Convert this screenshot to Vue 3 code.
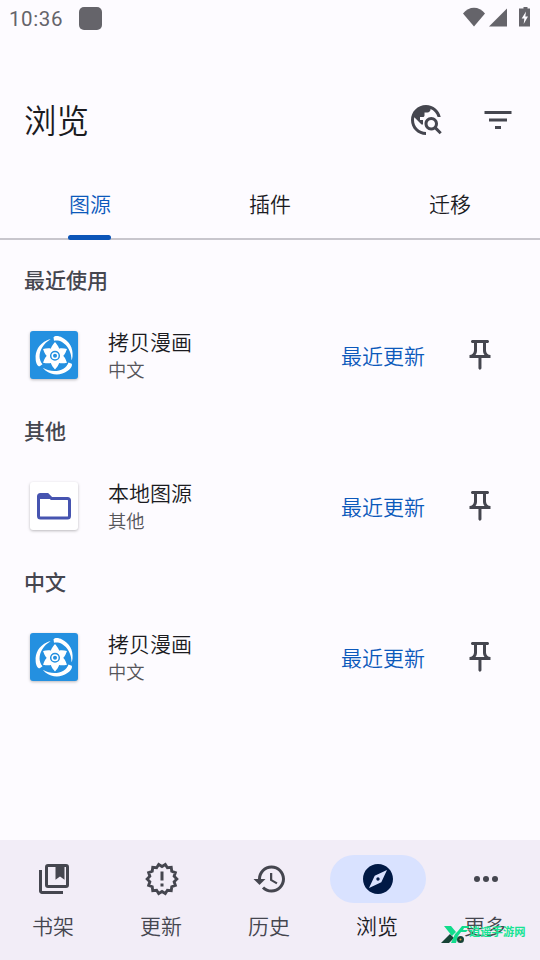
<script setup>
const tabs = ['图源', '插件', '迁移']
const sections = [
  { heading: '最近使用', name: '拷贝漫画', lang: '中文', icon: 'reel' },
  { heading: '其他', name: '本地图源', lang: '其他', icon: 'folder' },
  { heading: '中文', name: '拷贝漫画', lang: '中文', icon: 'reel' },
]
const nav = [
  { label: '书架', icon: 'library' },
  { label: '更新', icon: 'badge' },
  { label: '历史', icon: 'history' },
  { label: '浏览', icon: 'compass' },
  { label: '更多', icon: 'more' },
]
// alternating outer and inner vertices around a centre
function star(cx, cy, outer, inner, count, offset) {
  return Array.from({ length: count * 2 }, (_, i) => {
    const a = offset + (i * Math.PI) / count
    const r = i % 2 ? inner : outer
    return `${(cx + r * Math.cos(a)).toFixed(2)},${(cy + r * Math.sin(a)).toFixed(2)}`
  }).join(' ')
}
const burst = star(12, 12, 9.9, 8.3, 14, 0)
</script>

<template>
  <div class="screen">
    <header class="status">
      <span class="clock">10:36</span>
      <span class="chip"></span>
      <svg class="signals" viewBox="0 0 72 24">
        <path d="M1 7.5C7-.1 17-.1 23 7.5L12 20.5z" />
        <path d="M45 2.500v18H27z" />
        <path d="M59 2.500h2.500V1h4v1.500H68V20.500H57V2.500z" />
        <path class="bolt" d="M64 5.500l-4.300 7h2.600l-.6 5.500 4.300-7.500h-2.700z" />
      </svg>
    </header>

    <div class="appbar">
      <h1>浏览</h1>
      <svg class="icon" viewBox="0 0 24 24"><path d="M19.3 16.9c.4-.7.7-1.5.7-2.4 0-2.5-2-4.500-4.500-4.500S11 12 11 14.500s2 4.500 4.500 4.500c.9 0 1.700-.3 2.400-.7l3.200 3.200 1.400-1.400-3.200-3.200zm-3.800.1c-1.400 0-2.500-1.100-2.500-2.500s1.100-2.500 2.500-2.500 2.500 1.100 2.500 2.500-1.100 2.500-2.500 2.500zM12 20v2C6.480 22 2 17.520 2 12S6.480 2 12 2c4.840 0 8.870 3.440 9.800 8h-2.070c-.64-2.460-2.400-4.470-4.730-5.410V5c0 1.100-.9 2-2 2h-2v2c0 .55-.45 1-1 1H8v2h2v3H9l-4.790-4.790C4.080 10.790 4 11.380 4 12c0 4.410 3.590 8 8 8z" /></svg>
      <svg class="icon" viewBox="0 0 24 24"><path d="M10 18h4v-2h-4v2zM3 6v2h18V6H3zm3 7h12v-2H6v2z" /></svg>
    </div>

    <nav class="tabs">
      <div v-for="(tab, i) in tabs" :key="tab" class="tab" :class="{ active: i === 0 }"><span>{{ tab }}</span></div>
    </nav>

    <main class="list">
      <section v-for="s in sections" :key="s.heading">
        <h2>{{ s.heading }}</h2>
        <div class="row">
          <svg v-if="s.icon === 'reel'" class="source reel" viewBox="0 0 48 48">
            <g transform="translate(25 24.800)">
              <path v-for="r in [0, 120, 240]" :key="r" :transform="`rotate(${r})`" d="M-1.500-18.500C0-20.500 4-20 7-18.300 14-15 18.500-8 17.500 1 17.300 2.500 17 3.500 16.500 4.500 16.500-4 12.500-10.500 7-13.800 4.500-15.200 1.500-15.500-1-15z" />
              <path v-for="r in [0, 60, 120, 180, 240, 300]" :key="'p' + r" :transform="`rotate(${r})`" d="M0-13.800C1.500-12 3.700-9.500 4.200-7L2.500-3.500h-5L-4.200-7C-3.700-9.500-1.500-12 0-13.800z" />
              <circle class="ring" r="4.300" />
              <circle class="dot" r="2" />
            </g>
          </svg>
          <svg v-else class="source folder" viewBox="0 0 48 48">
            <path class="outline" d="M10.500 12.500h7l4 4h16a2 2 0 0 1 2 2v15.500a2 2 0 0 1-2 2h-27a2 2 0 0 1-2-2v-19.500a2 2 0 0 1 2-2z" />
            <path d="M9 12.500h9l3.500 3.500v1H9z" />
          </svg>
          <div class="info">
            <div class="name">{{ s.name }}</div>
            <div class="lang">{{ s.lang }}</div>
          </div>
          <span class="latest">最近更新</span>
          <svg class="icon" viewBox="0 0 24 24"><path d="M14 4v5c0 1.120.37 2.160 1 3H9c.65-.86 1-1.900 1-3V4h4m3-2H7c-.55 0-1 .45-1 1s.45 1 1 1h1v5c0 1.660-1.340 3-3 3v2h5.970v7l1 1 1-1v-7H19v-2c-1.660 0-3-1.340-3-3V4h1c.55 0 1-.45 1-1s-.45-1-1-1z" /></svg>
        </div>
      </section>
    </main>

    <footer class="bottom">
      <div v-for="item in nav" :key="item.label" class="dest" :class="{ current: item.icon === 'compass' }">
        <div class="pill">
          <svg class="icon" viewBox="0 0 24 24">
            <template v-if="item.icon === 'library'">
              <path d="M4 6H2v14c0 1.100.9 2 2 2h14v-2H4z" />
              <path fill-rule="evenodd" d="M8 2h12a2 2 0 0 1 2 2v12a2 2 0 0 1-2 2H8a2 2 0 0 1-2-2V4a2 2 0 0 1 2-2zm0 2v12h12V4z" />
              <path d="M13 3h6v9.500l-3-2.200-3 2.200z" />
            </template>
            <template v-else-if="item.icon === 'badge'">
              <polygon class="burst" :points="burst" />
              <path d="M11 7h2v6h-2zM11 15h2v2h-2z" />
            </template>
            <path v-else-if="item.icon === 'history'" d="M13 3c-4.970 0-9 4.030-9 9H1l3.890 3.890.07.14L9 12H6c0-3.870 3.130-7 7-7s7 3.130 7 7-3.130 7-7 7c-1.930 0-3.680-.79-4.940-2.060l-1.420 1.420C8.270 19.990 10.510 21 13 21c4.970 0 9-4.030 9-9s-4.030-9-9-9zm-1 5v5l4.280 2.540.72-1.210-3.500-2.080V8z" />
            <path v-else-if="item.icon === 'compass'" d="M12 10.900c-.61 0-1.100.49-1.100 1.100s.49 1.100 1.100 1.100 1.100-.49 1.100-1.100-.49-1.100-1.100-1.100zM12 2C6.480 2 2 6.480 2 12s4.480 10 10 10 10-4.480 10-10S17.520 2 12 2zm2.190 12.190L6 18l3.810-8.190L18 6z" />
            <template v-else>
              <circle cx="6" cy="12" r="2" /><circle cx="12" cy="12" r="2" /><circle cx="18" cy="12" r="2" />
            </template>
          </svg>
        </div>
        <span class="caption">{{ item.label }}</span>
      </div>
    </footer>

    <div class="stamp">
      <svg viewBox="0 0 28 20">
        <path class="dark" d="M0 18L9 9l4 4-5 5z" />
        <path class="green" d="M3 1h7l5 6-4 4zM10 18l4-9 3-3 4-5h9l-2 2h-5l-1 2h5l-2 2h-5l-3 4-2 7z" />
        <circle class="dark" cx="19.500" cy="14.500" r="3.500" />
        <circle class="eye" cx="19.500" cy="14.500" r="1" />
      </svg>
      <span>逍遥手游网</span>
    </div>
  </div>
</template>

<style>
body {
  margin: 0;
  background: #fdfbff;
}
</style>

<style scoped>
.screen {
  position: relative;
  display: flex;
  flex-direction: column;
  width: 540px;
  height: 960px;
  overflow: hidden;
  background: #fdfbff;
  color: #1b1b1f;
  font-family: "Noto Sans CJK SC", Roboto, sans-serif;
  font-size: 21px;
  font-weight: 350;
}
.status {
  display: flex;
  align-items: center;
  height: 36px;
  margin-bottom: 36px;
  padding: 0 6px 0 9px;
  color: #65646a;
}
.clock {
  width: 70px;
  padding-top: 1px;
  font-family: Roboto, sans-serif;
  font-size: 20.500px;
  font-weight: 400;
  letter-spacing: 0.600px;
}
.chip {
  width: 23px;
  height: 23px;
  border-radius: 5px;
  background: #65646a;
}
.signals {
  width: 72px;
  height: 24px;
  margin: 0 0 0 auto;
  fill: #65646a;
}
.signals .bolt {
  fill: #fdfbff;
}
.appbar {
  display: flex;
  align-items: center;
  gap: 36px;
  height: 96px;
  padding: 0 24px;
}
h1 {
  flex: 1;
  margin: 0;
  padding-bottom: 2px;
  font-size: 32.500px;
  font-weight: 350;
  line-height: 48px;
}
.icon {
  display: block;
  flex: none;
  width: 36px;
  height: 36px;
  fill: #45464f;
}
.tabs {
  display: flex;
  height: 70px;
  border-bottom: 2px solid #c8c6cd;
}
.tab {
  position: relative;
  display: flex;
  flex: 1;
  align-items: center;
  justify-content: center;
}
.active {
  color: #0c59bb;
}
.active::after {
  content: "";
  position: absolute;
  bottom: -2px;
  left: 68px;
  width: 43px;
  height: 5px;
  border-radius: 3px;
  background: #0c55b8;
}
.list {
  flex: 1;
  padding-top: 6px;
}
h2 {
  height: 67px;
  box-sizing: border-box;
  margin: 0;
  padding-left: 24px;
  color: #45464f;
  font-size: 21px;
  font-weight: 500;
  line-height: 67px;
}
.row {
  display: flex;
  align-items: center;
  height: 84px;
  padding: 0 42px 0 30px;
}
.source {
  width: 48px;
  height: 48px;
  margin-right: 30px;
  border-radius: 3px;
  box-shadow: 0 1px 3px #0004;
}
.reel {
  background: #2490e0;
  fill: #fff;
}
.ring {
  fill: #fff;
  stroke: #2490e0;
  stroke-width: 1.500;
}
.dot {
  fill: #2490e0;
}
.folder {
  background: #fff;
  fill: #4654b0;
}
.outline {
  fill: none;
  stroke: #4654b0;
  stroke-width: 3;
}
.info {
  flex: 1;
}
.name {
  line-height: 28px;
}
.lang {
  color: #55555a;
  font-size: 18.300px;
  line-height: 28px;
}
.latest {
  margin-right: 37px;
  color: #0c59bb;
}
.bottom {
  display: flex;
  height: 120px;
  background: #f2edf7;
}
.dest {
  display: flex;
  flex: 1;
  flex-direction: column;
  align-items: center;
  padding-top: 15px;
  color: #45464f;
  line-height: 30px;
}
.pill {
  display: flex;
  align-items: center;
  justify-content: center;
  width: 96px;
  height: 48px;
  margin-bottom: 7px;
  border-radius: 24px;
}
.caption {
  padding-right: 2px;
}
.current {
  color: #1b1b1f;
}
.current .pill {
  background: #d9e2ff;
}
.current .icon {
  fill: #001945;
}
.burst {
  fill: none;
  stroke: #45464f;
  stroke-width: 1.900;
}
.stamp {
  position: absolute;
  top: 925px;
  left: 441px;
  display: flex;
  color: #18e494;
  font-size: 11.300px;
  font-weight: 700;
  line-height: 12px;
  white-space: nowrap;
}
.stamp svg {
  width: 28px;
  height: 20px;
}
.green {
  fill: #12dc8c;
}
.dark {
  fill: #174336;
}
.eye {
  fill: #e29a45;
}
</style>
